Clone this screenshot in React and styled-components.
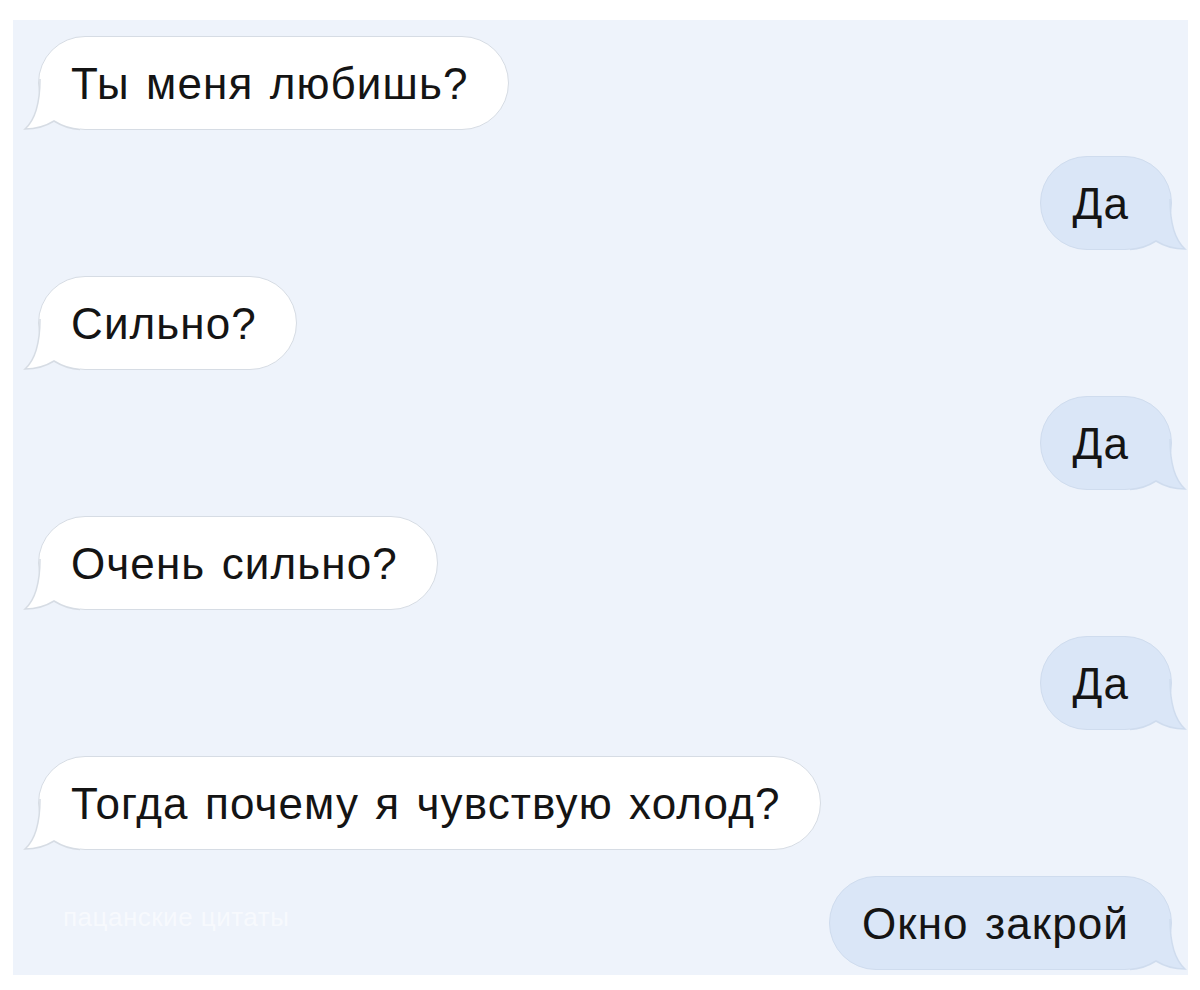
import React from 'react';
import styled, { createGlobalStyle } from 'styled-components';

const GlobalStyle = createGlobalStyle`
  html, body {
    margin: 0;
    padding: 0;
    background: #ffffff;
  }
  body {
    font-family: "Liberation Sans", Arial, sans-serif;
  }
`;

const Page = styled.div`
  width: 1200px;
  height: 990px;
  padding: 20px 12px 15px 13px;
  box-sizing: border-box;
`;

const Chat = styled.div`
  height: 100%;
  background: #eef3fb;
  display: flex;
  flex-direction: column;
  gap: 26px;
  padding: 16px 16px 0 25px;
  box-sizing: border-box;
  position: relative;
`;

const Row = styled.div`
  display: flex;
  justify-content: ${p => (p.$out ? 'flex-end' : 'flex-start')};
`;

const Bubble = styled.div`
  position: relative;
  height: 94px;
  box-sizing: border-box;
  display: flex;
  align-items: center;
  padding: ${p => (p.$out ? '0 42px 0 32px' : '0 39px 0 32px')};
  border-radius: 47px;
  background: ${p => (p.$out ? '#dae6f7' : '#ffffff')};
  border: 1.5px solid ${p => (p.$out ? '#cfdcee' : '#d6dce4')};
  color: #141414;
  font-size: 44px;
  letter-spacing: 1.1px;
  word-spacing: 3px;
  white-space: nowrap;
`;

const Text = styled.span`
  position: relative;
  padding-top: 2px;
`;

const TailSvg = styled.svg`
  position: absolute;
  bottom: -2px;
  ${p => (p.$out ? 'right: -15px; transform: scaleX(-1);' : 'left: -15px;')}
  width: 56px;
  height: 52px;
  overflow: visible;
`;

const Watermark = styled.div`
  position: absolute;
  left: 50px;
  bottom: 42px;
  font-size: 26px;
  color: rgba(255, 255, 255, 0.55);
  letter-spacing: 0.5px;
`;

const Tail = ({ out }) => (
  <TailSvg $out={out} viewBox="0 0 56 52">
    <path
      d="M16 0 C16 26, 10 42, 1 50 C12 50, 22 47, 30 42 C38 47, 46 50, 56 50 L56 0 Z"
      fill={out ? '#dae6f7' : '#ffffff'}
    />
    <path
      d="M16 0 C16 26, 10 42, 1 50 C12 50, 22 47, 30 42 C38 47, 46 50, 56 50.5"
      fill="none"
      stroke={out ? '#cfdcee' : '#d6dce4'}
      strokeWidth="1.5"
    />
  </TailSvg>
);

const messages = [
  { text: 'Ты меня любишь?' },
  { text: 'Да', out: true },
  { text: 'Сильно?' },
  { text: 'Да', out: true },
  { text: 'Очень сильно?' },
  { text: 'Да', out: true },
  { text: 'Тогда почему я чувствую холод?' },
  { text: 'Окно закрой', out: true },
];

export default function App() {
  return (
    <Page>
      <GlobalStyle />
      <Chat>
        {messages.map((m, i) => (
          <Row key={i} $out={m.out}>
            <Bubble $out={m.out}>
              <Tail out={m.out} />
              <Text>{m.text}</Text>
            </Bubble>
          </Row>
        ))}
        <Watermark>пацанские цитаты</Watermark>
      </Chat>
    </Page>
  );
}
